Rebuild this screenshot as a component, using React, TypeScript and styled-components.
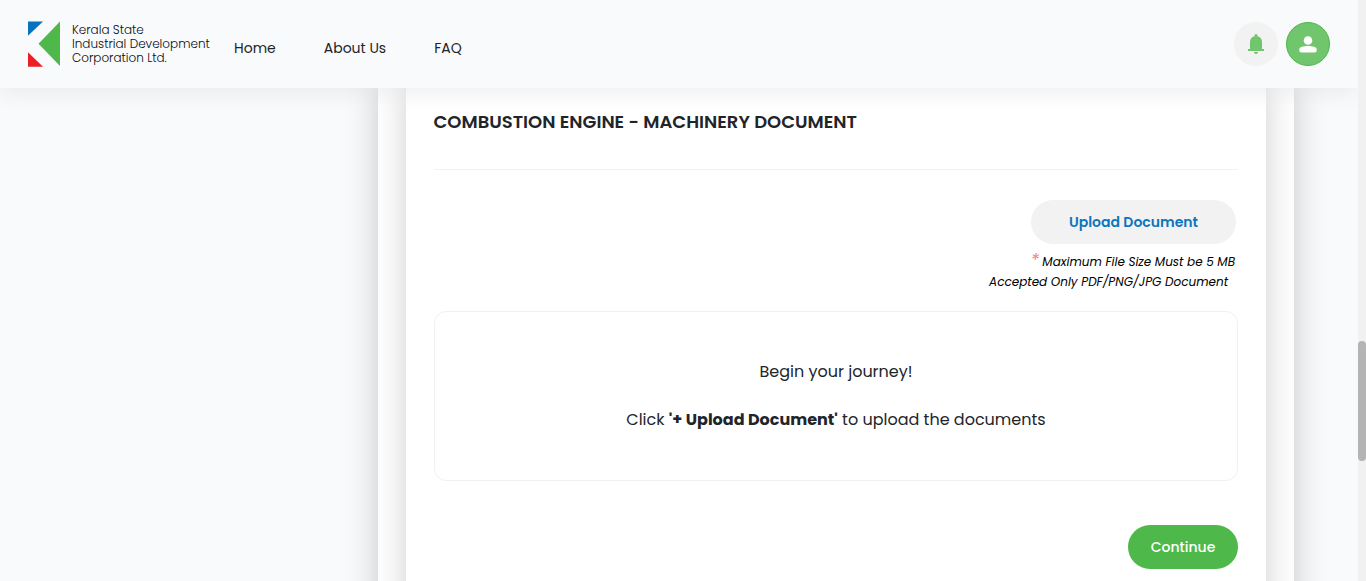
import React from "react";
import styled, { createGlobalStyle } from "styled-components";

const GlobalStyle = createGlobalStyle`
  *, *::before, *::after { box-sizing: border-box; }
  body {
    margin: 0;
    overflow: hidden;
    background: #f9fafc;
    color: #212529;
    font-family: Poppins, Inter, "Liberation Sans", sans-serif;
    font-size: 16px;
    line-height: 24px;
  }
`;

const Screen = styled.div`
  display: flex;
  width: 100%;
  height: 581px;
  overflow: hidden;
`;

const Page = styled.div`
  flex: 1;
  display: flex;
  flex-direction: column;
  overflow: hidden;
`;

const Header = styled.header`
  position: relative;
  z-index: 1;
  flex: none;
  display: flex;
  align-items: center;
  height: 88px;
  padding: 0 28px;
  background: #f9fafc;
  box-shadow: 0 4px 24px rgba(0, 0, 0, 0.07);
`;

const Brand = styled.div`
  display: flex;
  width: 182px;
  gap: 12px;
`;

const LogoMark = styled.svg`
  flex: none;
  width: 32px;
  height: 46px;
`;

const BrandName = styled.div`
  padding-top: 2px;
  font-size: 12px;
  font-weight: 300;
  line-height: 14px;
  color: #0c0c0e;
  white-space: nowrap;
`;

const Nav = styled.nav`
  display: flex;
  gap: 48px;
  margin-left: 24px;
  padding-top: 8px;
`;

const NavLink = styled.a`
  font-size: 14px;
  white-space: nowrap;
`;

const Actions = styled.div`
  display: flex;
  gap: 8px;
  margin-left: auto;
`;

const RoundButton = styled.button<{ $filled?: boolean }>`
  display: flex;
  align-items: center;
  justify-content: center;
  width: 44px;
  height: 44px;
  padding: 0;
  border: 1px solid ${(p) => (p.$filled ? "#4fb84a" : "#f2f2f2")};
  border-radius: 50%;
  background: ${(p) => (p.$filled ? "#71c56d" : "#f2f2f2")};
  color: ${(p) => (p.$filled ? "#ffffff" : "#71c56d")};
`;

const Main = styled.main`
  flex: none;
  display: flex;
  height: 560px;
  padding-left: 378px;
`;

const OuterPanel = styled.div`
  display: flex;
  flex: none;
  width: 916px;
  padding: 0 28px;
  background: #ffffff;
  box-shadow: 0 0 32px rgba(0, 0, 0, 0.2);
`;

const Panel = styled.section`
  display: flex;
  flex-direction: column;
  width: 860px;
  padding: 19px 28px 0;
  background: #ffffff;
  box-shadow: 0 0 32px rgba(0, 0, 0, 0.2);
`;

const Title = styled.h1`
  height: 63px;
  margin: 0;
  border-bottom: 1px solid #f1f1f1;
  font-size: 18px;
  font-weight: 600;
  line-height: 29px;
  text-indent: -0.5px;
`;

const UploadArea = styled.div`
  display: flex;
  flex-direction: column;
  align-items: flex-end;
  height: 141px;
  padding: 30px 2px 0 0;
`;

const Button = styled.button<{ $primary?: boolean }>`
  width: ${(p) => (p.$primary ? 110 : 205)}px;
  height: 44px;
  flex: none;
  padding: 0;
  border: 0;
  border-radius: 22px;
  background: ${(p) => (p.$primary ? "#4fb84a" : "#f2f2f2")};
  color: ${(p) => (p.$primary ? "#ffffff" : "#0d75bc")};
  font-family: inherit;
  font-size: 14px;
  font-weight: ${(p) => (p.$primary ? 500 : 600)};
`;

const Hints = styled.div`
  display: flex;
  flex-direction: column;
  align-items: flex-end;
  padding: 8px 1px 0 0;
`;

const Hint = styled.div<{ $inset?: number }>`
  display: flex;
  gap: 3px;
  margin-right: ${(p) => p.$inset ?? 0}px;
  color: #000000;
  font-size: 12px;
  font-style: italic;
  line-height: 20px;
`;

const Required = styled.span`
  height: 20px;
  font-size: 18px;
  line-height: 15px;
  color: #f58080;
`;

const EmptyState = styled.div`
  display: flex;
  flex-direction: column;
  align-items: center;
  gap: 24px;
  height: 170px;
  padding-top: 48px;
  border: 1px solid #f1f1f1;
  border-radius: 12px;

  p { margin: 0; }
`;

const Footer = styled.div`
  display: flex;
  justify-content: flex-end;
  padding-top: 44px;
`;

const Scrollbar = styled.div`
  flex: none;
  width: 8px;
  padding-top: 341px;
  background: #f1f1f1;
`;

const Thumb = styled.div`
  height: 120px;
  border-radius: 4px;
  background: #b4b4b4;
`;

export default function App() {
  return (
    <>
      <GlobalStyle />
      <Screen>
        <Page>
          <Header>
            <Brand>
              <LogoMark viewBox="0 0 32 46">
                <path d="M0 .4h15L0 14.700z" fill="#0872bd" />
                <path d="M0 31.300v14.400h15z" fill="#ec2024" />
                <path d="M32 .6v44.400L10.500 22.800z" fill="#4fb84a" />
              </LogoMark>
              <BrandName>
                Kerala State<br />
                Industrial Development<br />
                Corporation Ltd.
              </BrandName>
            </Brand>
            <Nav>
              <NavLink>Home</NavLink>
              <NavLink>About Us</NavLink>
              <NavLink>FAQ</NavLink>
            </Nav>
            <Actions>
              <RoundButton aria-label="Notifications">
                <svg width="16" height="20" viewBox="0 0 16 20" fill="currentColor">
                  <path d="M0 17v-2h2V8a6 6 0 0 1 4.5-5.8V1.5a1.5 1.5 0 0 1 3 0v.7A6 6 0 0 1 14 8v7h2v2zM6 18h4a2 2 0 0 1-4 0z" />
                </svg>
              </RoundButton>
              <RoundButton $filled aria-label="Account">
                <svg width="18" height="17" viewBox="0 0 18 17" fill="currentColor">
                  <circle cx="9" cy="4.500" r="4.300" />
                  <path d="M.3 13.300C.3 10.800 4.500 9.900 9 9.900s8.700.9 8.700 3.400v1.200q0 2-2 2H2.300q-2 0-2-2z" />
                </svg>
              </RoundButton>
            </Actions>
          </Header>
          <Main>
            <OuterPanel>
              <Panel>
                <Title>COMBUSTION ENGINE - MACHINERY DOCUMENT</Title>
                <UploadArea>
                  <Button>Upload Document</Button>
                  <Hints>
                    <Hint>
                      <Required>*</Required>
                      <span>Maximum File Size Must be 5 MB</span>
                    </Hint>
                    <Hint $inset={7}>Accepted Only PDF/PNG/JPG Document</Hint>
                  </Hints>
                </UploadArea>
                <EmptyState>
                  <p>Begin your journey!</p>
                  <p>
                    Click <b>'+ Upload Document'</b> to upload the documents
                  </p>
                </EmptyState>
                <Footer>
                  <Button $primary>Continue</Button>
                </Footer>
              </Panel>
            </OuterPanel>
          </Main>
        </Page>
        <Scrollbar><Thumb /></Scrollbar>
      </Screen>
    </>
  );
}
